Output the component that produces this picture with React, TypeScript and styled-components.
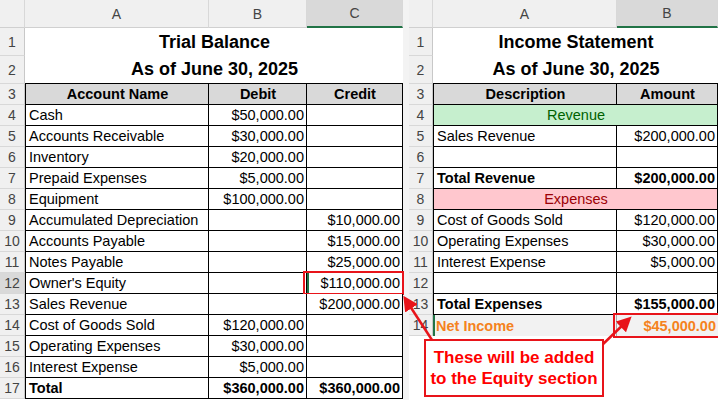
import React from "react";
import styled, { createGlobalStyle, css } from "styled-components";

const Global = createGlobalStyle`
  body { margin: 0; background: #fff; font-family: "Liberation Sans", Arial, sans-serif; }
`;

const Page = styled.div`
  position: relative; width: 718px; height: 400px; overflow: hidden;
  display: flex; gap: 6px; background: #f3f3f3;
`;

const Sheet = styled.div<{ cols: string }>`
  display: grid; grid-template-columns: ${p => p.cols};
  grid-auto-rows: 21px; grid-template-rows: 28px 28px 28px; align-content: start;
  background: #fff;
`;

const ColHead = styled.div<{ sel?: boolean }>`
  background: ${p => (p.sel ? "#d9d9d9" : "#f0f0f0")};
  border-bottom: ${p => (p.sel ? "2px solid #217346" : "1px solid #d0d0d0")};
  border-right: 1px solid #d8d8d8;
  display: flex; align-items: center; justify-content: center;
  font-size: 14px; color: #444;
`;

const RowNum = styled.div<{ sel?: boolean }>`
  background: ${p => (p.sel ? "#d9d9d9" : "#f0f0f0")};
  border-bottom: 1px solid #d8d8d8; border-right: 1px solid #c8c8c8;
  display: flex; align-items: center; justify-content: center;
  font-size: 14px; color: #444;
`;

const Cell = styled.div<{
  align?: string; bold?: boolean; box?: boolean; bg?: string; color?: string;
  span?: number; title?: boolean; hl?: boolean; green?: boolean;
}>`
  position: relative;
  grid-column: span ${p => p.span || 1};
  display: flex; align-items: center;
  justify-content: ${p => p.align === "r" ? "flex-end" : p.align === "c" ? "center" : "flex-start"};
  padding: 0 2px 0 3px; white-space: nowrap; overflow: visible;
  font-size: ${p => (p.title ? "18px" : "14.5px")};
  font-weight: ${p => (p.bold || p.title ? 700 : 400)};
  color: ${p => p.color || "#000"};
  background: ${p => p.bg || "#fff"};
  ${p => p.box && css`border-right: 1px solid #000; border-bottom: 1px solid #000;`}
  ${p => p.green && css`box-shadow: inset 2px 0 0 #217346;`}
  ${p => p.hl && css`
    &::after { content: ""; position: absolute; left: -4px; right: -2px; top: -2px; bottom: -2px; border: 2px solid #e8141a; }
  `}
`;

const Callout = styled.div`
  position: absolute; left: 424px; top: 339px; width: 180px; height: 58px;
  border: 2px solid #e8141a; background: #fff; box-sizing: border-box;
  display: flex; align-items: center; justify-content: center; text-align: center;
  color: #ff0000; font-weight: 700; font-size: 17px; line-height: 21px;
`;

const Arrows = styled.svg`
  position: absolute; left: 0; top: 0; pointer-events: none;
`;

const tb: { n: number; a: string; b?: string; c?: string; bold?: boolean; hl?: boolean }[] = [
  { n: 4, a: "Cash", b: "$50,000.00" },
  { n: 5, a: "Accounts Receivable", b: "$30,000.00" },
  { n: 6, a: "Inventory", b: "$20,000.00" },
  { n: 7, a: "Prepaid Expenses", b: "$5,000.00" },
  { n: 8, a: "Equipment", b: "$100,000.00" },
  { n: 9, a: "Accumulated Depreciation", c: "$10,000.00" },
  { n: 10, a: "Accounts Payable", c: "$15,000.00" },
  { n: 11, a: "Notes Payable", c: "$25,000.00" },
  { n: 12, a: "Owner's Equity", c: "$110,000.00", hl: true },
  { n: 13, a: "Sales Revenue", c: "$200,000.00" },
  { n: 14, a: "Cost of Goods Sold", b: "$120,000.00" },
  { n: 15, a: "Operating Expenses", b: "$30,000.00" },
  { n: 16, a: "Interest Expense", b: "$5,000.00" },
  { n: 17, a: "Total", b: "$360,000.00", c: "$360,000.00", bold: true },
];

const is: { n: number; a: string; b?: string; bold?: boolean }[] = [
  { n: 5, a: "Sales Revenue", b: "$200,000.00" },
  { n: 6, a: "" },
  { n: 7, a: "Total Revenue", b: "$200,000.00", bold: true },
];
const is2: { n: number; a: string; b?: string; bold?: boolean }[] = [
  { n: 9, a: "Cost of Goods Sold", b: "$120,000.00" },
  { n: 10, a: "Operating Expenses", b: "$30,000.00" },
  { n: 11, a: "Interest Expense", b: "$5,000.00" },
  { n: 12, a: "" },
  { n: 13, a: "Total Expenses", b: "$155,000.00", bold: true },
];

export default function App() {
  return (
    <Page>
      <Global />
      <Sheet cols="25px 184px 98px 96px">
        <ColHead /><ColHead>A</ColHead><ColHead>B</ColHead><ColHead sel>C</ColHead>
        <RowNum>1</RowNum><Cell span={3} align="c" title>Trial Balance</Cell>
        <RowNum>2</RowNum><Cell span={3} align="c" title style={{ borderBottom: "1px solid #000" }}>As of June 30, 2025</Cell>
        <RowNum>3</RowNum>
        <Cell box bold align="c" bg="#d9d9d9" style={{ borderLeft: "1px solid #000" }}>Account Name</Cell>
        <Cell box bold align="c" bg="#d9d9d9">Debit</Cell>
        <Cell box bold align="c" bg="#d9d9d9">Credit</Cell>
        {tb.map(r => (
          <React.Fragment key={r.n}>
            <RowNum sel={r.n === 12}>{r.n}</RowNum>
            <Cell box bold={r.bold} style={{ borderLeft: "1px solid #000" }}>{r.a}</Cell>
            <Cell box bold={r.bold} align="r">{r.b}</Cell>
            <Cell box bold={r.bold} align="r" hl={r.hl} green={r.hl}>{r.c}</Cell>
          </React.Fragment>
        ))}
      </Sheet>
      <Sheet cols="24px 184px 101px">
        <ColHead /><ColHead>A</ColHead><ColHead sel>B</ColHead>
        <RowNum>1</RowNum><Cell span={2} align="c" title>Income Statement</Cell>
        <RowNum>2</RowNum><Cell span={2} align="c" title style={{ borderBottom: "1px solid #000" }}>As of June 30, 2025</Cell>
        <RowNum>3</RowNum>
        <Cell box bold align="c" bg="#d9d9d9" style={{ borderLeft: "1px solid #000" }}>Description</Cell>
        <Cell box bold align="c" bg="#d9d9d9">Amount</Cell>
        <RowNum>4</RowNum>
        <Cell span={2} box align="c" bg="#c6efce" color="#006100" style={{ borderLeft: "1px solid #000" }}>Revenue</Cell>
        {is.map(r => (
          <React.Fragment key={r.n}>
            <RowNum>{r.n}</RowNum>
            <Cell box bold={r.bold} style={{ borderLeft: "1px solid #000" }}>{r.a}</Cell>
            <Cell box bold={r.bold} align="r">{r.b}</Cell>
          </React.Fragment>
        ))}
        <RowNum>8</RowNum>
        <Cell span={2} box align="c" bg="#ffc7ce" color="#9c0006" style={{ borderLeft: "1px solid #000" }}>Expenses</Cell>
        {is2.map(r => (
          <React.Fragment key={r.n}>
            <RowNum>{r.n}</RowNum>
            <Cell box bold={r.bold} style={{ borderLeft: "1px solid #000" }}>{r.a}</Cell>
            <Cell box bold={r.bold} align="r">{r.b}</Cell>
          </React.Fragment>
        ))}
        <RowNum>14</RowNum>
        <Cell bold color="#f58220" bg="#f2f2f2" green style={{ borderRight: "1px solid #aaa" }}>Net Income</Cell>
        <Cell bold color="#f58220" bg="#f2f2f2" align="r" hl>$45,000.00</Cell>
      </Sheet>
      <Arrows width="718" height="400">
        <defs>
          <marker id="ah" markerWidth="6" markerHeight="6" refX="4" refY="3" orient="auto">
            <path d="M0,0 L6,3 L0,6 Z" fill="#e8141a" />
          </marker>
        </defs>
        <line x1="432" y1="340" x2="406" y2="300" stroke="#e8141a" strokeWidth="2.5" markerEnd="url(#ah)" />
        <line x1="600" y1="347" x2="628" y2="320" stroke="#e8141a" strokeWidth="2.5" markerEnd="url(#ah)" />
      </Arrows>
      <Callout>These will be added<br />to the Equity section</Callout>
    </Page>
  );
}
